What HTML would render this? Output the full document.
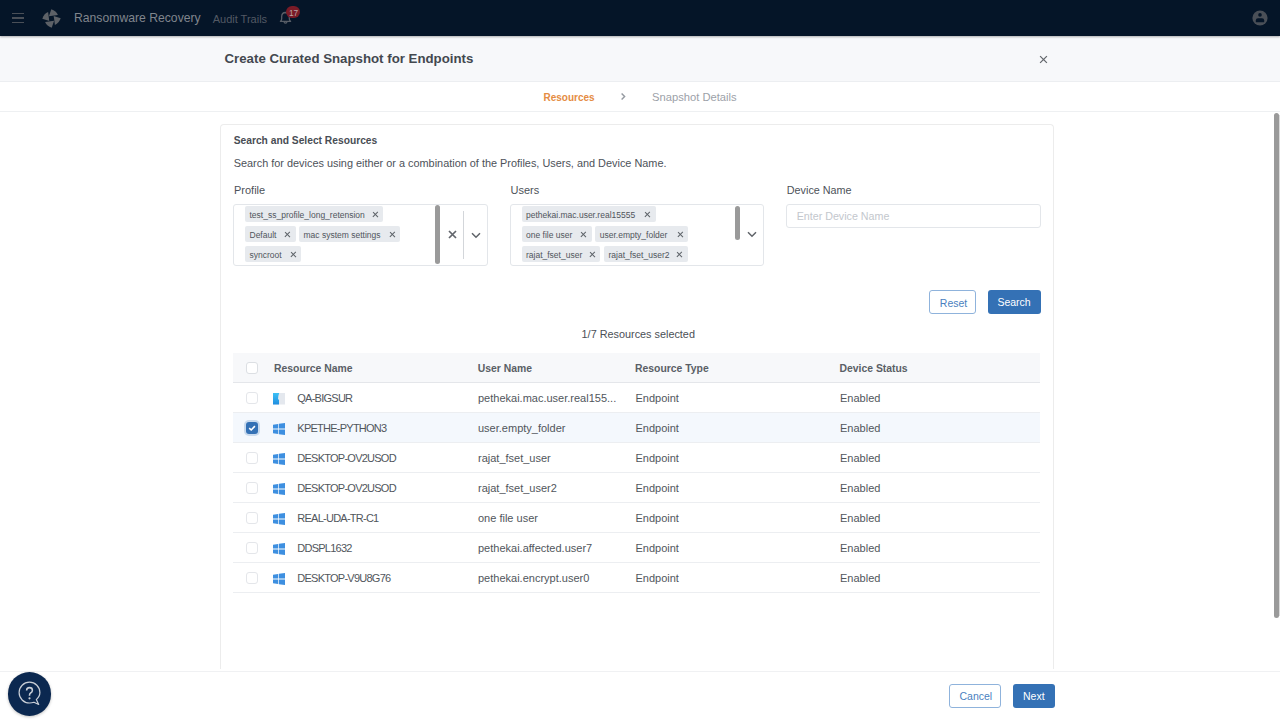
<!DOCTYPE html>
<html><head><meta charset="utf-8">
<style>
*{box-sizing:border-box;margin:0;padding:0}
html,body{width:1280px;height:720px;overflow:hidden;background:#fff;font-family:"Liberation Sans",sans-serif}
.a{position:absolute;white-space:nowrap;line-height:1}
#hdr{position:absolute;left:0;top:0;width:1280px;height:36px;background:#051528;box-shadow:0 1px 2px rgba(0,0,0,.3);z-index:5}
#titlebar{position:absolute;left:0;top:36px;width:1280px;height:46px;background:#f7f8fa;border-bottom:1px solid #eceef1}
#stepbar{position:absolute;left:0;top:82px;width:1280px;height:30px;background:#fff;border-bottom:1px solid #eef0f2}
#card{position:absolute;left:220px;top:123.5px;width:833.5px;height:545px;border:1px solid #ececec;border-bottom:none;border-radius:4px 4px 0 0;background:#fff}
.lbl{font-size:11px;color:#4d5259}
.box{position:absolute;border:1px solid #e3e6ea;border-radius:3px;background:#fff}
.chip{position:absolute;height:16px;background:#e7eaee;border-radius:2px;font-size:8.5px;color:#50555c;line-height:1}
.chip span{position:absolute;left:4.5px;top:4.4px}
.chip i{position:absolute;top:5.5px;width:5px;height:5px}
.chip i:before,.chip i:after{content:"";position:absolute;left:-0.8px;top:1.9px;width:6.6px;height:1.25px;background:#5d6268;transform:rotate(45deg)}
.chip i:after{transform:rotate(-45deg)}
.sb{position:absolute;width:5px;background:#9a9a9a;border-radius:3px}
.btn-o{position:absolute;border:1px solid #8fb3dc;border-radius:3px;background:#fff;color:#4a7fc0;font-size:10.5px}
.btn-f{position:absolute;border-radius:3px;background:#3471b5;color:#fff;font-size:10.5px}
.th{font-size:10.4px;font-weight:700;color:#5a5f66}
.td{font-size:11px;color:#51565c}
.up{letter-spacing:-0.75px}
.cb{position:absolute;width:12px;height:12px;border:1px solid #e4e6ea;border-radius:3px;background:#fff}
.row{position:absolute;left:233px;width:807px;height:30px;border-bottom:1px solid #eceef1}
</style></head><body>

<!-- top header -->
<div id="hdr">
  <div style="position:absolute;left:12px;top:12.8px;width:12px;height:1.5px;background:#4a4f57"></div>
  <div style="position:absolute;left:12px;top:17.1px;width:12px;height:1.5px;background:#4a4f57"></div>
  <div style="position:absolute;left:12px;top:21.8px;width:12px;height:1.5px;background:#4a4f57"></div>
  <svg style="position:absolute;left:42px;top:8.5px" width="19" height="19" viewBox="-9.5 -9.5 19 19">
    <g fill="#5d6167">
      <path d="M-0.2,-9.2 Q4.6,-7.6 6.4,-3.4 L-2.6,-2.2 Z"/>
      <path d="M-0.2,-9.2 Q4.6,-7.6 6.4,-3.4 L-2.6,-2.2 Z" transform="rotate(90)"/>
      <path d="M-0.2,-9.2 Q4.6,-7.6 6.4,-3.4 L-2.6,-2.2 Z" transform="rotate(180)"/>
      <path d="M-0.2,-9.2 Q4.6,-7.6 6.4,-3.4 L-2.6,-2.2 Z" transform="rotate(270)"/>
    </g>
  </svg>
  <div class="a" style="left:74px;top:12.3px;font-size:12.2px;color:#80858d">Ransomware Recovery</div>
  <div class="a" style="left:212.7px;top:13.6px;font-size:11px;color:#535964">Audit Trails</div>
  <svg style="position:absolute;left:279px;top:11px" width="14" height="14" viewBox="0 0 14 14">
    <path d="M1.4,10.3 Q2.7,9.3 2.7,7.4 L2.7,5.6 Q2.7,1.6 6.5,1.5 Q10.3,1.6 10.3,5.6 L10.3,7.4 Q10.3,9.3 11.6,10.3 Z" fill="none" stroke="#575d66" stroke-width="1.3" stroke-linejoin="round"/>
    <path d="M4.9,11.2 Q6.5,13.2 8.1,11.2" fill="none" stroke="#575d66" stroke-width="1.3"/>
  </svg>
  <div style="position:absolute;left:286px;top:6px;width:14px;height:12px;border-radius:6px;background:#7a1b27"></div>
  <div class="a" style="left:288.9px;top:8.5px;font-size:8.3px;color:#b9a4a8">17</div>
  <svg style="position:absolute;left:1252.2px;top:10.4px" width="16" height="16" viewBox="0 0 16 16">
    <circle cx="8" cy="8" r="7.6" fill="#4a4f57"/>
    <circle cx="8" cy="4.9" r="1.8" fill="#051528"/>
    <path d="M3.8,12.2 L3.8,10.4 Q3.8,8.3 6,8.3 L10,8.3 Q12.2,8.3 12.2,10.4 L12.2,12.2 Z" fill="#051528"/>
  </svg>
</div>

<!-- modal title -->
<div id="titlebar">
  <div class="a" style="left:224.5px;top:16px;font-size:13.25px;font-weight:700;color:#43484f">Create Curated Snapshot for Endpoints</div>
  <svg style="position:absolute;left:1039px;top:19px" width="9" height="9" viewBox="0 0 9 9">
    <path d="M1.1,1.1 L7.9,7.9 M7.9,1.1 L1.1,7.9" stroke="#63676c" stroke-width="1.25"/>
  </svg>
</div>

<!-- stepper -->
<div id="stepbar">
  <div class="a" style="left:543.5px;top:11.1px;font-size:10px;font-weight:700;color:#e58c43">Resources</div>
  <svg style="position:absolute;left:620px;top:10.1px" width="7" height="9" viewBox="0 0 7 9">
    <path d="M1.6,1.6 L4.6,4.5 L1.6,7.4" fill="none" stroke="#959aa1" stroke-width="1.45"/>
  </svg>
  <div class="a" style="left:652px;top:9.6px;font-size:11.2px;color:#9ca1a8">Snapshot Details</div>
</div>

<!-- scrollbar -->
<div style="position:absolute;left:1279px;top:115px;width:1px;height:501px;background:#dadada"></div>
<div style="position:absolute;left:1274px;top:113px;width:5px;height:505px;border-radius:3px;background:#9a9a9a"></div>

<!-- card -->
<div id="card"></div>
<div class="a" style="left:233.7px;top:135.5px;font-size:10.25px;font-weight:700;color:#484d54">Search and Select Resources</div>
<div class="a lbl" style="left:233.7px;top:157.6px;font-size:10.9px">Search for devices using either or a combination of the Profiles, Users, and Device Name.</div>
<div class="a lbl" style="left:234px;top:184.9px">Profile</div>
<div class="a lbl" style="left:510.5px;top:184.9px">Users</div>
<div class="a lbl" style="left:786.8px;top:185.2px;font-size:10.8px">Device Name</div>

<!-- profile box -->
<div class="box" style="left:233px;top:204px;width:254.5px;height:61.5px"></div>
<div class="chip" style="left:245px;top:206.3px;width:138px"><span>test_ss_profile_long_retension</span><i style="left:127.5px"></i></div>
<div class="chip" style="left:245px;top:226.3px;width:50.6px"><span>Default</span><i style="left:40px"></i></div>
<div class="chip" style="left:299px;top:226.3px;width:100.5px"><span>mac system settings</span><i style="left:90.4px"></i></div>
<div class="chip" style="left:245px;top:246.2px;width:56px"><span>syncroot</span><i style="left:45.6px"></i></div>
<div class="sb" style="left:435px;top:205.3px;height:59px"></div>
<svg style="position:absolute;left:447.5px;top:230px" width="9" height="9" viewBox="0 0 9 9">
  <path d="M1,1 L8,8 M8,1 L1,8" stroke="#62666c" stroke-width="1.7"/>
</svg>
<div style="position:absolute;left:463px;top:210.5px;width:1px;height:48.5px;background:#d3d6da"></div>
<svg style="position:absolute;left:470.5px;top:231.5px" width="10" height="7" viewBox="0 0 10 7">
  <path d="M1,1.3 L5,5.2 L9,1.3" fill="none" stroke="#5f6369" stroke-width="1.5"/>
</svg>

<!-- users box -->
<div class="box" style="left:510px;top:204px;width:254px;height:61.5px"></div>
<div class="chip" style="left:521.5px;top:206.3px;width:134.2px"><span>pethekai.mac.user.real15555</span><i style="left:123.2px"></i></div>
<div class="chip" style="left:521.5px;top:226.3px;width:70px"><span>one file user</span><i style="left:59.7px"></i></div>
<div class="chip" style="left:595.3px;top:226.3px;width:93.2px"><span>user.empty_folder</span><i style="left:82.8px"></i></div>
<div class="chip" style="left:521.5px;top:246.2px;width:78.7px"><span>rajat_fset_user</span><i style="left:68.5px"></i></div>
<div class="chip" style="left:604px;top:246.2px;width:83.7px"><span>rajat_fset_user2</span><i style="left:73.2px"></i></div>
<div class="sb" style="left:735px;top:205.5px;height:34.5px"></div>
<svg style="position:absolute;left:746.5px;top:231px" width="10" height="7" viewBox="0 0 10 7">
  <path d="M1,1.3 L5,5.2 L9,1.3" fill="none" stroke="#5f6369" stroke-width="1.5"/>
</svg>

<!-- device name -->
<div class="box" style="left:786px;top:204px;width:255px;height:24px"></div>
<div class="a" style="left:796.7px;top:211px;font-size:10.7px;color:#c3c7cd">Enter Device Name</div>

<!-- buttons -->
<div class="btn-o" style="left:929px;top:290px;width:47px;height:24px"><span class="a" style="left:9.8px;top:6.8px">Reset</span></div>
<div class="btn-f" style="left:987.5px;top:290px;width:53px;height:24px"><span class="a" style="left:9.9px;top:7px">Search</span></div>

<div class="a" style="left:581.6px;top:328.6px;font-size:10.85px;color:#4b5056">1/7 Resources selected</div>

<!-- table -->
<div style="position:absolute;left:233px;top:353px;width:807px;height:30px;background:#f7f8fa;border-bottom:1px solid #e4e6ea"></div>
<div class="cb" style="left:246px;top:362px;border-color:#dcdfe3"></div>
<div class="a th" style="left:274px;top:364px">Resource Name</div>
<div class="a th" style="left:477.8px;top:364px">User Name</div>
<div class="a th" style="left:635px;top:364px">Resource Type</div>
<div class="a th" style="left:839.5px;top:364px">Device Status</div>

<div class="row" style="top:383px"></div>
<div class="row" style="top:413px;background:#f4f8fd"></div>
<div class="row" style="top:443px"></div>
<div class="row" style="top:473px"></div>
<div class="row" style="top:503px"></div>
<div class="row" style="top:533px"></div>
<div class="row" style="top:563px"></div>

<!-- row checkboxes -->
<div class="cb" style="left:246px;top:392px"></div>
<div style="position:absolute;left:246px;top:422px;width:12px;height:12px;border-radius:3px;background:#3471b5;box-shadow:0 0 0 2px rgba(52,113,181,.22)"></div>
<svg style="position:absolute;left:246px;top:422px" width="12" height="12" viewBox="0 0 12 12"><path d="M3.2,6.2 L5.2,8 L8.9,4.1" fill="none" stroke="#fff" stroke-width="1.6"/></svg>
<div class="cb" style="left:246px;top:452px"></div>
<div class="cb" style="left:246px;top:482px"></div>
<div class="cb" style="left:246px;top:512px"></div>
<div class="cb" style="left:246px;top:542px"></div>
<div class="cb" style="left:246px;top:572px"></div>

<!-- icons -->
<svg style="position:absolute;left:273px;top:393px" width="12" height="12" viewBox="0 0 12 12">
  <defs><linearGradient id="mg" x1="0" y1="0" x2="0" y2="1"><stop offset="0" stop-color="#3cc0f5"/><stop offset="1" stop-color="#1f8ee0"/></linearGradient></defs>
  <rect x="0" y="0" width="12" height="11.5" fill="#e4e8ee"/>
  <path d="M0,0 L6.2,0 Q5,3 5,6.5 L6,6.5 L6,11.5 L0,11.5 Z" fill="url(#mg)"/>
</svg>
<svg class="win" style="position:absolute;left:273px;top:423px" width="12" height="12" viewBox="0 0 12 12"><path d="M0,1.7 L5.2,0.9 L5.2,5.6 L0,5.6Z M5.9,0.8 L12,0 L12,5.6 L5.9,5.6Z M0,6.4 L5.2,6.4 L5.2,11.1 L0,10.3Z M5.9,6.4 L12,6.4 L12,12 L5.9,11.2Z" fill="#3d8fe0"/></svg>
<svg style="position:absolute;left:273px;top:453px" width="12" height="12" viewBox="0 0 12 12"><path d="M0,1.7 L5.2,0.9 L5.2,5.6 L0,5.6Z M5.9,0.8 L12,0 L12,5.6 L5.9,5.6Z M0,6.4 L5.2,6.4 L5.2,11.1 L0,10.3Z M5.9,6.4 L12,6.4 L12,12 L5.9,11.2Z" fill="#3d8fe0"/></svg>
<svg style="position:absolute;left:273px;top:483px" width="12" height="12" viewBox="0 0 12 12"><path d="M0,1.7 L5.2,0.9 L5.2,5.6 L0,5.6Z M5.9,0.8 L12,0 L12,5.6 L5.9,5.6Z M0,6.4 L5.2,6.4 L5.2,11.1 L0,10.3Z M5.9,6.4 L12,6.4 L12,12 L5.9,11.2Z" fill="#3d8fe0"/></svg>
<svg style="position:absolute;left:273px;top:513px" width="12" height="12" viewBox="0 0 12 12"><path d="M0,1.7 L5.2,0.9 L5.2,5.6 L0,5.6Z M5.9,0.8 L12,0 L12,5.6 L5.9,5.6Z M0,6.4 L5.2,6.4 L5.2,11.1 L0,10.3Z M5.9,6.4 L12,6.4 L12,12 L5.9,11.2Z" fill="#3d8fe0"/></svg>
<svg style="position:absolute;left:273px;top:543px" width="12" height="12" viewBox="0 0 12 12"><path d="M0,1.7 L5.2,0.9 L5.2,5.6 L0,5.6Z M5.9,0.8 L12,0 L12,5.6 L5.9,5.6Z M0,6.4 L5.2,6.4 L5.2,11.1 L0,10.3Z M5.9,6.4 L12,6.4 L12,12 L5.9,11.2Z" fill="#3d8fe0"/></svg>
<svg style="position:absolute;left:273px;top:573px" width="12" height="12" viewBox="0 0 12 12"><path d="M0,1.7 L5.2,0.9 L5.2,5.6 L0,5.6Z M5.9,0.8 L12,0 L12,5.6 L5.9,5.6Z M0,6.4 L5.2,6.4 L5.2,11.1 L0,10.3Z M5.9,6.4 L12,6.4 L12,12 L5.9,11.2Z" fill="#3d8fe0"/></svg>

<!-- row texts -->
<div class="a td up" style="left:297.3px;top:393.3px">QA-BIGSUR</div>
<div class="a td" style="left:478px;top:393.3px">pethekai.mac.user.real155...</div>
<div class="a td" style="left:635.5px;top:393.3px">Endpoint</div>
<div class="a td" style="left:840px;top:393.3px">Enabled</div>

<div class="a td up" style="left:297.3px;top:423.3px">KPETHE-PYTHON3</div>
<div class="a td" style="left:478px;top:423.3px">user.empty_folder</div>
<div class="a td" style="left:635.5px;top:423.3px">Endpoint</div>
<div class="a td" style="left:840px;top:423.3px">Enabled</div>

<div class="a td up" style="left:297.3px;top:453.3px">DESKTOP-OV2USOD</div>
<div class="a td" style="left:478px;top:453.3px">rajat_fset_user</div>
<div class="a td" style="left:635.5px;top:453.3px">Endpoint</div>
<div class="a td" style="left:840px;top:453.3px">Enabled</div>

<div class="a td up" style="left:297.3px;top:483.3px">DESKTOP-OV2USOD</div>
<div class="a td" style="left:478px;top:483.3px">rajat_fset_user2</div>
<div class="a td" style="left:635.5px;top:483.3px">Endpoint</div>
<div class="a td" style="left:840px;top:483.3px">Enabled</div>

<div class="a td up" style="left:297.3px;top:513.3px">REAL-UDA-TR-C1</div>
<div class="a td" style="left:478px;top:513.3px">one file user</div>
<div class="a td" style="left:635.5px;top:513.3px">Endpoint</div>
<div class="a td" style="left:840px;top:513.3px">Enabled</div>

<div class="a td up" style="left:297.3px;top:543.3px">DDSPL1632</div>
<div class="a td" style="left:478px;top:543.3px">pethekai.affected.user7</div>
<div class="a td" style="left:635.5px;top:543.3px">Endpoint</div>
<div class="a td" style="left:840px;top:543.3px">Enabled</div>

<div class="a td up" style="left:297.3px;top:573.3px">DESKTOP-V9U8G76</div>
<div class="a td" style="left:478px;top:573.3px">pethekai.encrypt.user0</div>
<div class="a td" style="left:635.5px;top:573.3px">Endpoint</div>
<div class="a td" style="left:840px;top:573.3px">Enabled</div>

<!-- footer -->
<div style="position:absolute;left:0;top:670.5px;width:1280px;height:49.5px;background:#fff;border-top:1px solid #f0f1f3"></div>
<div class="btn-o" style="left:949px;top:683.5px;width:52px;height:24.3px"><span class="a" style="left:9.5px;top:6.2px">Cancel</span></div>
<div class="btn-f" style="left:1013px;top:683.5px;width:42.3px;height:24px"><span class="a" style="left:10px;top:7px">Next</span></div>

<!-- help fab -->
<div style="position:absolute;left:7.7px;top:672.3px;width:43.4px;height:43.4px;border-radius:50%;background:#0b2850;box-shadow:0 1px 3px rgba(0,0,0,.25)"></div>
<svg style="position:absolute;left:17px;top:680px" width="25" height="27" viewBox="0 0 25 27">
  <path d="M19.3,19.6 Q22.9,16.6 22.9,12.6 A10.4,10.4 0 1 0 12.5,23 Q14.8,23 17,22.3 L21.7,24.5 Z" fill="none" stroke="#c9ced6" stroke-width="1.2" stroke-linejoin="round"/>
  <path d="M9.6,10.6 Q9.6,7.6 12.5,7.6 Q15.4,7.6 15.4,10.3 Q15.4,12 13.6,13 Q12.5,13.6 12.5,15.2 L12.5,15.8" fill="none" stroke="#c9ced6" stroke-width="1.55"/>
  <circle cx="12.5" cy="18.3" r="1.1" fill="#c9ced6"/>
</svg>

</body></html>
